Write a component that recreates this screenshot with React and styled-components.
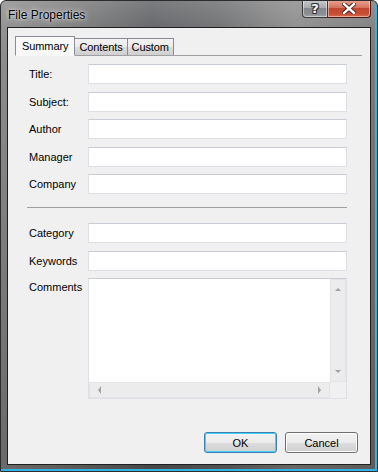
import React from "react";
import styled, { createGlobalStyle } from "styled-components";

const Global = createGlobalStyle`
  html, body { margin: 0; padding: 0; background: #ffffff; }
  * { box-sizing: border-box; }
  body { font-family: "Liberation Sans", Arial, sans-serif; font-size: 11px; color: #000; }
`;

const Window = styled.div`
  width: 378px;
  height: 472px;
  display: flex;
  flex-direction: column;
  border: 1px solid #2c2c2c;
  border-radius: 6px 6px 0 0;
  background:
    linear-gradient(180deg, rgba(255,255,255,0.18) 0%, rgba(255,255,255,0.05) 30px, rgba(0,0,0,0) 60px, rgba(0,0,0,0.25) 100%),
    linear-gradient(90deg, #8d8d8d 0%, #7b7b7b 18%, #5d5f62 40%, #6b6c6e 58%, #8a8a8a 78%, #7a7a7a 100%);
  box-shadow: inset -2px -2px 0 #2fb4e6;
  overflow: hidden;
`;

const TitleBar = styled.div`
  height: 26px;
  flex: none;
  display: flex;
  align-items: flex-start;
  padding-left: 7px;
`;

const Title = styled.div`
  font-family: "Liberation Sans", Arial, sans-serif;
  font-size: 12px;
  color: #000;
  line-height: 16px;
  margin-top: 6px;
  text-shadow: 0 0 6px rgba(255,255,255,0.9), 0 0 2px rgba(255,255,255,0.8);
  flex: 1;
`;

const Caption = styled.div`
  display: flex;
  margin-right: 6px;
  margin-top: -1px;
`;

const CapBtn = styled.div`
  height: 18px;
  display: flex;
  align-items: center;
  justify-content: center;
  border: 1px solid ${p => (p.$close ? "#4a1a12" : "#3a3a3a")};
  border-top: none;
  width: ${p => (p.$close ? "43px" : "26px")};
  border-radius: ${p => (p.$close ? "0 0 4px 0" : "0 0 0 4px")};
  ${p => (p.$close ? "border-left: none;" : "")}
  background: ${p =>
    p.$close
      ? "linear-gradient(180deg, #e8a694 0%, #d3735e 45%, #c2462f 50%, #c74e33 80%, #d86a4a 100%)"
      : "linear-gradient(180deg, #c9cacc 0%, #a8aaad 45%, #85888c 50%, #8a8d91 80%, #9fa2a6 100%)"};
  box-shadow: inset 0 0 0 1px rgba(255,255,255,0.45);
  color: #fff;
  font-family: "DejaVu Sans", sans-serif;
  font-weight: bold;
  font-size: 13px;
  text-shadow: 0 0 1px #222, 1px 1px 0 #333, -1px -1px 0 #333, 1px -1px 0 #333, -1px 1px 0 #333;
`;

const FrameBody = styled.div`
  flex: 1;
  display: flex;
  padding: 0 6px 6px 6px;
`;

const Client = styled.div`
  flex: 1;
  display: flex;
  flex-direction: column;
  background: #f0f0f0;
  border: 1px solid #1f1f1f;
  padding: 0 12px 11px 7px;
`;

const TabStrip = styled.div`
  display: flex;
  align-items: flex-end;
  height: 27px;
  padding-top: 7px;
  position: relative;
  z-index: 1;
`;

const Tab = styled.div`
  height: ${p => (p.$active ? "20px" : "17px")};
  padding: 0 ${p => (p.$active ? "6px" : "4px")};
  display: flex;
  align-items: center;
  border: 1px solid #898c95;
  border-bottom: ${p => (p.$active ? "1px solid #f9f9f9" : "none")};
  margin-right: -1px;
  margin-bottom: ${p => (p.$active ? "-1px" : "0")};
  background: ${p =>
    p.$active ? "#f9f9f9" : "linear-gradient(180deg, #f2f2f2 0%, #ebebeb 50%, #dddddd 51%, #cfcfcf 100%)"};
  color: #000;
  line-height: 1;
  letter-spacing: -0.1px;
  padding-top: ${p => (p.$active ? "0" : "1px")};
  z-index: ${p => (p.$active ? 2 : 1)};
`;

const Panel = styled.div`
  border-top: 1px solid #a0a0a0;
  padding: 8px 15px 0 14px;
  margin-right: -4px;
  display: flex;
  flex-direction: column;
`;

const Fields = styled.div`
  display: grid;
  grid-template-columns: 59px 259px;
  row-gap: 7.5px;
  align-items: center;
`;

const Label = styled.div`
  align-self: ${p => (p.$top ? "start" : "center")};
  padding-top: ${p => (p.$top ? "3px" : "0")};
  white-space: nowrap;
`;

const Input = styled.div`
  height: 20px;
  background: #fff;
  border: 1px solid #dcdfe6;
  border-top-color: #c8ccd4;
  border-radius: 1px;
`;

const Separator = styled.div`
  height: 1px;
  background: #a0a0a0;
  margin: 13px 0 15px -2px;
  width: 320px;
`;

const TextArea = styled.div`
  height: 121px;
  background: #fff;
  border: 1px solid #dcdfe6;
  border-top-color: #c8ccd4;
  display: grid;
  grid-template-columns: 1fr 16px;
  grid-template-rows: 1fr 16px;
`;

const ScrollTrack = styled.div`
  background: #ececec;
  border: 1px solid #e4e4e4;
  display: flex;
  flex-direction: ${p => (p.$vertical ? "column" : "row")};
  justify-content: space-between;
  align-items: center;
  padding: ${p => (p.$vertical ? "6px 0" : "0 6px")};
`;

const Corner = styled.div`
  background: #f0f0f0;
`;

const Arrow = ({ dir }) => {
  const pts = {
    up: "1,5 4,2 7,5",
    down: "1,2 4,5 7,2",
    left: "5,0 2,4 5,8",
    right: "2,0 5,4 2,8",
  }[dir];
  const w = dir === "up" || dir === "down" ? 8 : 7;
  const h = dir === "up" || dir === "down" ? 7 : 8;
  return (
    <svg width={w} height={h} viewBox={`0 0 ${w} ${h}`}>
      <polygon points={pts} fill="#a2a2a2" />
    </svg>
  );
};

const ButtonRow = styled.div`
  margin-top: auto;
  display: flex;
  justify-content: flex-end;
  gap: 8px;
`;

const Button = styled.div`
  width: 73px;
  height: 21px;
  display: flex;
  align-items: center;
  justify-content: center;
  border: 1px solid ${p => (p.$default ? "#3c7fb1" : "#707070")};
  border-radius: 3px;
  background: linear-gradient(180deg, #f2f2f2 0%, #ebebeb 50%, #dddddd 51%, #cfcfcf 100%);
  box-shadow: inset 0 0 0 1px ${p => (p.$default ? "#48d0fb" : "#fcfcfc")};
  color: #000;
`;

const CloseGlyph = () => (
  <svg width="14" height="11" viewBox="0 0 14 11">
    <path d="M2 1 L12 10 M12 1 L2 10" stroke="#3a1a14" strokeWidth="4.2" strokeLinecap="square" />
    <path d="M2 1 L12 10 M12 1 L2 10" stroke="#ffffff" strokeWidth="2.4" strokeLinecap="square" />
  </svg>
);

export default function App() {
  const top = ["Title:", "Subject:", "Author", "Manager", "Company"];
  const bottom = ["Category", "Keywords"];
  return (
    <>
      <Global />
      <Window>
        <TitleBar>
          <Title>File Properties</Title>
          <Caption>
            <CapBtn>?</CapBtn>
            <CapBtn $close>
              <CloseGlyph />
            </CapBtn>
          </Caption>
        </TitleBar>
        <FrameBody>
          <Client>
            <TabStrip>
              <Tab $active>Summary</Tab>
              <Tab>Contents</Tab>
              <Tab>Custom</Tab>
            </TabStrip>
            <Panel>
              <Fields>
                {top.map(l => (
                  <React.Fragment key={l}>
                    <Label>{l}</Label>
                    <Input />
                  </React.Fragment>
                ))}
              </Fields>
              <Separator />
              <Fields>
                {bottom.map(l => (
                  <React.Fragment key={l}>
                    <Label>{l}</Label>
                    <Input />
                  </React.Fragment>
                ))}
                <Label $top>Comments</Label>
                <TextArea>
                  <div />
                  <ScrollTrack $vertical>
                    <Arrow dir="up" />
                    <Arrow dir="down" />
                  </ScrollTrack>
                  <ScrollTrack>
                    <Arrow dir="left" />
                    <Arrow dir="right" />
                  </ScrollTrack>
                  <Corner />
                </TextArea>
              </Fields>
            </Panel>
            <ButtonRow>
              <Button $default>OK</Button>
              <Button>Cancel</Button>
            </ButtonRow>
          </Client>
        </FrameBody>
      </Window>
    </>
  );
}
